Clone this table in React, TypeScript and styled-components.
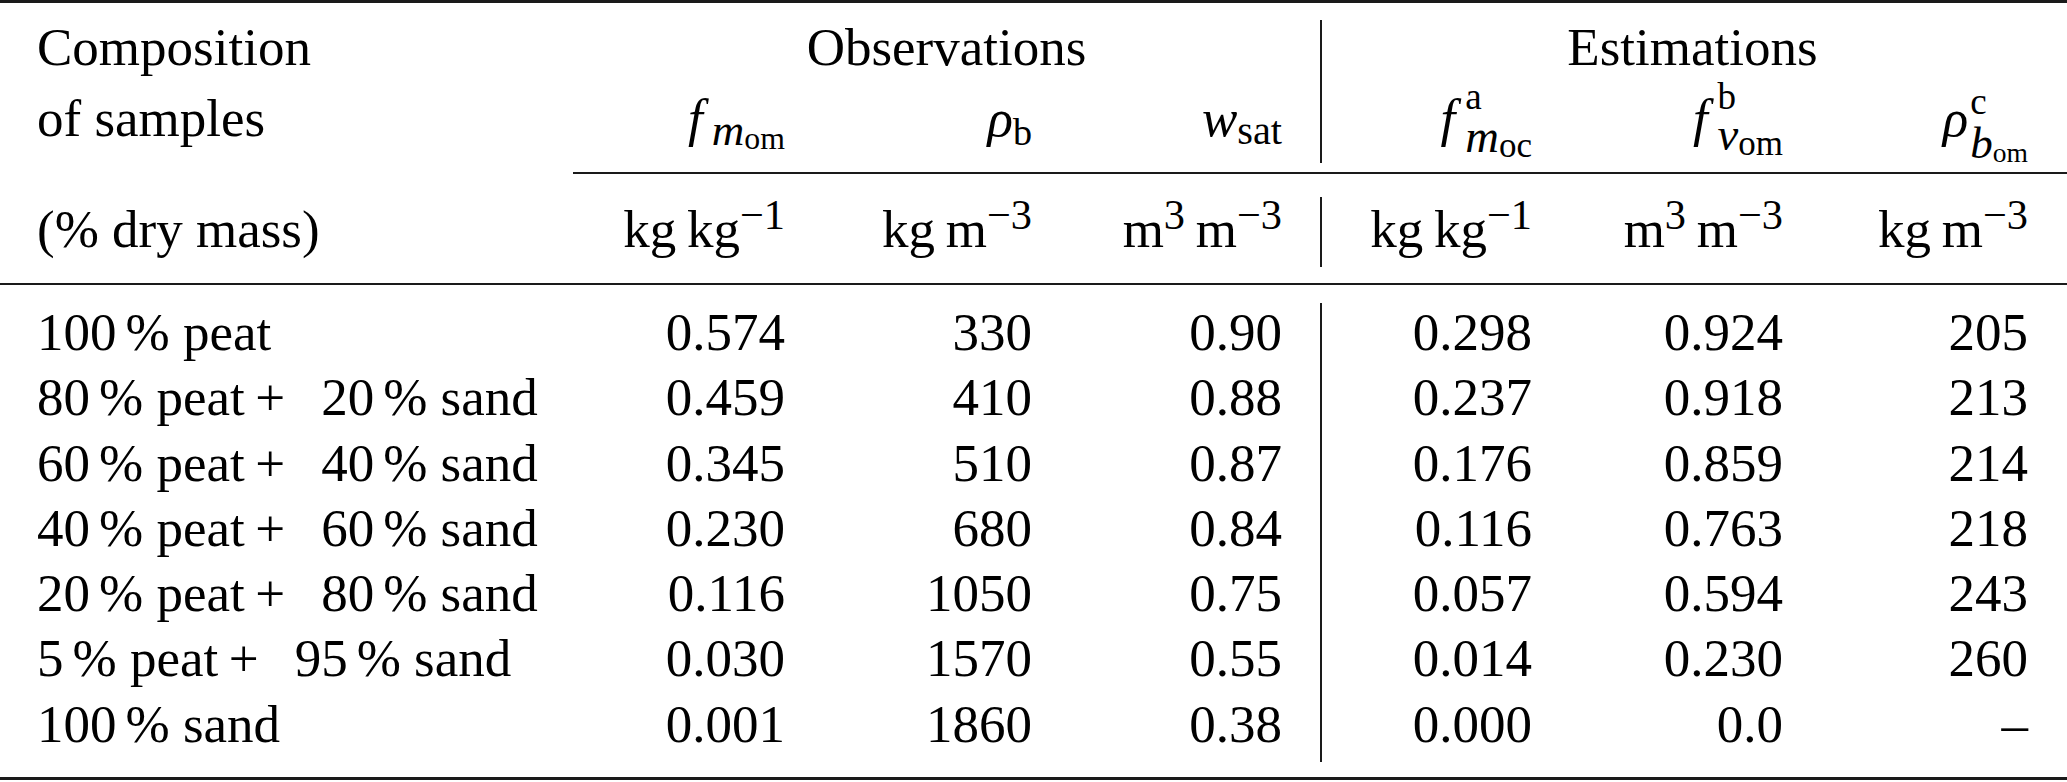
import React from 'react';
import styled, { createGlobalStyle } from 'styled-components';

const GlobalStyle = createGlobalStyle`
  html, body {
    margin: 0;
    padding: 0;
    background: #fff;
  }
  body {
    font-family: 'Liberation Serif', 'Times New Roman', serif;
    color: #000;
  }
`;

type DataRow = {
  peat?: number;
  sand?: number;
  values: string[];
};

const rows: DataRow[] = [
  { peat: 100, values: ['0.574', '330', '0.90', '0.298', '0.924', '205'] },
  { peat: 80, sand: 20, values: ['0.459', '410', '0.88', '0.237', '0.918', '213'] },
  { peat: 60, sand: 40, values: ['0.345', '510', '0.87', '0.176', '0.859', '214'] },
  { peat: 40, sand: 60, values: ['0.230', '680', '0.84', '0.116', '0.763', '218'] },
  { peat: 20, sand: 80, values: ['0.116', '1050', '0.75', '0.057', '0.594', '243'] },
  { peat: 5, sand: 95, values: ['0.030', '1570', '0.55', '0.014', '0.230', '260'] },
  { sand: 100, values: ['0.001', '1860', '0.38', '0.000', '0.0', '–'] },
];

// grid columns holding the six numeric columns (6 is the vertical rule)
const valueCols = [2, 3, 4, 7, 8, 9];

const Power: React.FC<{ exp: string }> = ({ exp }) => (
  <Script $size={0.8} $shift={18}>
    {exp}
  </Script>
);

const App: React.FC = () => {
  return (
    <>
      <GlobalStyle />
      <Table>
        <HRule $col="1 / -1" $row={1} />

        <Cell $col="1" $row="2" $lh={89} $align="left" $pl={37}>
          Composition
        </Cell>
        <Cell $col="2 / 5" $row="2" $lh={89} $align="center" $pl={38}>
          Observations
        </Cell>
        <Cell $col="7 / 10" $row="2" $lh={89} $align="center" $pl={35}>
          Estimations
        </Cell>

        <Cell $col="1" $row="3" $lh={52} $align="left" $pl={37}>
          of samples
        </Cell>
        <Cell $col="2" $row="3" $lh={52}>
          <Var>f</Var>
          <Script $size={0.85} $shift={-9} $italic $gap={9}>
            m
          </Script>
          <Script $size={0.6} $shift={-13}>om</Script>
        </Cell>
        <Cell $col="3" $row="3" $lh={52}>
          <Var>ρ</Var>
          <Script $size={0.72} $shift={-9}>b</Script>
        </Cell>
        <Cell $col="4" $row="3" $lh={52}>
          <Var>w</Var>
          <Script $size={0.76} $shift={-8}>sat</Script>
        </Cell>
        <Cell $col="7" $row="3" $lh={52}>
          <Var>f</Var>
          <Sup $size={0.7} $shift={27} $gap={10}>
            a
          </Sup>
          <Script $size={0.88} $shift={-16} $italic>
            m
          </Script>
          <Script $size={0.66} $shift={-21}>oc</Script>
        </Cell>
        <Cell $col="8" $row="3" $lh={52}>
          <Var>f</Var>
          <Sup $size={0.7} $shift={27} $gap={10}>
            b
          </Sup>
          <Script $size={0.88} $shift={-14} $italic>
            v
          </Script>
          <Script $size={0.66} $shift={-19}>om</Script>
        </Cell>
        <Cell $col="9" $row="3" $lh={52}>
          <Var>ρ</Var>
          <Sup $size={0.7} $shift={22} $gap={2}>
            c
          </Sup>
          <Script $size={0.85} $shift={-22} $italic>
            b
          </Script>
          <Script $size={0.52} $shift={-26}>om</Script>
        </Cell>

        <HRule $col="2 / -1" $row={4} />

        <Cell $col="1" $row="5" $lh={110} $align="left" $pl={37}>
          (% dry mass)
        </Cell>
        <Cell $col="2" $row="5" $lh={110}>
          kg<Thin />kg<Power exp="−1" />
        </Cell>
        <Cell $col="3" $row="5" $lh={110}>
          kg<Thin />m<Power exp="−3" />
        </Cell>
        <Cell $col="4" $row="5" $lh={110}>
          m<Power exp="3" />
          <Thin />m<Power exp="−3" />
        </Cell>
        <Cell $col="7" $row="5" $lh={110}>
          kg<Thin />kg<Power exp="−1" />
        </Cell>
        <Cell $col="8" $row="5" $lh={110}>
          m<Power exp="3" />
          <Thin />m<Power exp="−3" />
        </Cell>
        <Cell $col="9" $row="5" $lh={110}>
          kg<Thin />m<Power exp="−3" />
        </Cell>

        <HRule $col="1 / -1" $row={6} />

        {rows.map((row, i) => {
          const r = String(8 + i);
          return (
            <React.Fragment key={r}>
              <Cell $col="1" $row={r} $lh={65.3} $align="left" $pl={37}>
                {row.peat !== undefined && (
                  <>
                    {row.peat}
                    <Pct>%</Pct> peat
                  </>
                )}
                {row.peat !== undefined && row.sand !== undefined && <Plus>+</Plus>}
                {row.sand !== undefined && (
                  <>
                    {row.sand}
                    <Pct>%</Pct> sand
                  </>
                )}
              </Cell>
              {row.values.map((v, j) => (
                <Cell key={j} $col={String(valueCols[j])} $row={r} $lh={65.3}>
                  {v}
                </Cell>
              ))}
            </React.Fragment>
          );
        })}

        <HRule $col="1 / -1" $row={16} />

        <VRule $row="2 / 4" $top={17} $bottom={9} />
        <VRule $row="5" $top={23} $bottom={16} />
        <VRule $row="7 / 16" $top={18} $bottom={15.5} />
      </Table>
    </>
  );
};

export default App;

const Table = styled.div`
  display: grid;
  width: 2067px;
  grid-template-columns: 573px 212px 247px 250px 38px 2px 210px 251px 245px 39px;
  grid-template-rows: 3px 89px 79.5px 2px 109.5px 2px 15px repeat(7, 65.3px) 20px 3px;
  font-size: 53px;
`;

const HRule = styled.div<{ $col: string; $row: number }>`
  grid-column: ${({ $col }) => $col};
  grid-row: ${({ $row }) => $row};
  background: #1a1a1a;
`;

const VRule = styled.div<{ $row: string; $top: number; $bottom: number }>`
  grid-column: 6;
  grid-row: ${({ $row }) => $row};
  margin-top: ${({ $top }) => $top}px;
  margin-bottom: ${({ $bottom }) => $bottom}px;
  background: #1a1a1a;
`;

const Cell = styled.div<{
  $col: string;
  $row: string;
  $lh: number;
  $align?: 'left' | 'right' | 'center';
  $pl?: number;
}>`
  grid-column: ${({ $col }) => $col};
  grid-row: ${({ $row }) => $row};
  align-self: start;
  line-height: ${({ $lh }) => $lh}px;
  text-align: ${({ $align }) => $align ?? 'right'};
  padding-left: ${({ $pl }) => $pl ?? 0}px;
  white-space: nowrap;
`;

const Var = styled.i`
  font-style: italic;
`;

const Script = styled.span<{ $size: number; $shift: number; $italic?: boolean; $gap?: number }>`
  font-size: ${({ $size }) => $size}em;
  font-style: ${({ $italic }) => ($italic ? 'italic' : 'normal')};
  vertical-align: ${({ $shift }) => $shift}px;
  line-height: 0;
  margin-left: ${({ $gap }) => $gap ?? 0}px;
`;

// superscript stacked over the subscript that follows it
const Sup = styled(Script)`
  display: inline-block;
  width: 0;
`;

// thin space between unit symbols
const Thin = styled.span`
  display: inline-block;
  width: 0.2em;
`;

const Pct = styled.span`
  margin-left: 0.17em;
`;

const Plus = styled.span`
  margin: 0 0.68em 0 0.2em;
`;
